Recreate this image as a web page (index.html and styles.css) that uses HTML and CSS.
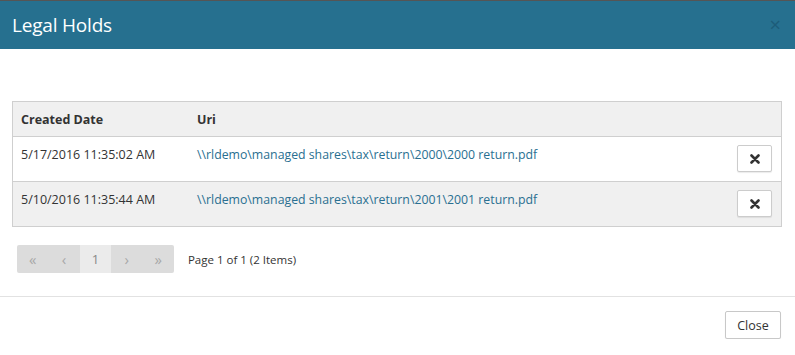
FILE: index.html
```html
<!DOCTYPE html>
<html>
<head>
<meta charset="utf-8">
<link rel="stylesheet" href="styles.css">
</head>
<body>
<div class="topbar"></div>
<div class="modal-header">
  <h1 class="modal-title">Legal Holds</h1>
  <span class="header-close">&times;</span>
</div>
<div class="modal-body">
  <div class="grid">
    <div class="row head">
      <div class="cell c-date">Created Date</div>
      <div class="cell c-uri">Uri</div>
      <div class="cell c-act"></div>
    </div>
    <div class="row">
      <div class="cell c-date">5/17/2016 11:35:02 AM</div>
      <div class="cell c-uri"><a class="link">\\rldemo\managed shares\tax\return\2000\2000 return.pdf</a></div>
      <div class="cell c-act"><button class="del-btn"><svg width="10" height="10" viewBox="0 0 10 10"><path d="M1.5 1.5 L8.5 8.5 M8.5 1.5 L1.5 8.5" stroke="#333" stroke-width="2.6" stroke-linecap="round"/></svg></button></div>
    </div>
    <div class="row alt">
      <div class="cell c-date">5/10/2016 11:35:44 AM</div>
      <div class="cell c-uri"><a class="link">\\rldemo\managed shares\tax\return\2001\2001 return.pdf</a></div>
      <div class="cell c-act"><button class="del-btn"><svg width="10" height="10" viewBox="0 0 10 10"><path d="M1.5 1.5 L8.5 8.5 M8.5 1.5 L1.5 8.5" stroke="#333" stroke-width="2.6" stroke-linecap="round"/></svg></button></div>
    </div>
  </div>
  <div class="pager-row">
    <div class="pager">
      <span class="pg">&laquo;</span>
      <span class="pg">&lsaquo;</span>
      <span class="pg active">1</span>
      <span class="pg">&rsaquo;</span>
      <span class="pg">&raquo;</span>
    </div>
    <span class="pager-info">Page 1 of 1 (2 Items)</span>
  </div>
</div>
<div class="modal-footer">
  <button class="close-btn">Close</button>
</div>
</body>
</html>
```
FILE: styles.css
```css
html, body {
  margin: 0;
  padding: 0;
  background: #fff;
  font-family: "Open Sans", "Noto Sans", sans-serif;
  color: #333;
}
.topbar {
  height: 1px;
  background: #555;
}
.modal-header {
  height: 48px;
  background: #26708f;
  display: flex;
  align-items: center;
  justify-content: space-between;
  padding: 0 14px 0 12px;
}
.modal-title {
  margin: 0;
  font-size: 19px;
  font-weight: 400;
  color: #fff;
  letter-spacing: -0.2px;
}
.header-close {
  color: #1b5874;
  font-size: 20px;
  line-height: 20px;
  opacity: 0.8;
}
.modal-body {
  padding: 52px 13px 0 12px;
  border-bottom: 1px solid #e2e2e2;
  height: 248px;
  box-sizing: border-box;
}
.grid {
  border: 1px solid #cfcfcf;
  font-size: 12.5px;
}
.row {
  display: flex;
  height: 44px;
  border-top: 1px solid #cfcfcf;
  background: #fff;
}
.row.head {
  height: 34px;
  border-top: none;
  background: #f0f0f0;
  font-weight: 700;
  align-items: center;
}
.row.alt {
  background: #f0f0f0;
}
.cell {
  box-sizing: border-box;
}
.row:not(.head) .cell {
  padding-top: 9px;
}
.c-date {
  width: 184px;
  padding-left: 8px;
}
.c-uri {
  flex: 1;
}
.c-act {
  width: 60px;
  display: flex;
  justify-content: flex-end;
  padding-right: 9px;
}
.row:not(.head) .c-act {
  padding-top: 8px;
}
.link {
  color: #2a6f91;
  font-size: 12.3px;
  text-decoration: none;
}
.del-btn {
  width: 35px;
  height: 27px;
  background: #fff;
  border: 1px solid #ccc;
  border-radius: 2px;
  display: flex;
  align-items: center;
  justify-content: center;
  padding: 0;
  box-shadow: 0 1px 1px rgba(0,0,0,0.08);
}
.pager-row {
  display: flex;
  align-items: center;
  margin-top: 18px;
  padding-left: 5px;
}
.pager {
  display: flex;
  background: #dcdcdc;
  border-radius: 2px;
  height: 28px;
}
.pg {
  width: 31.4px;
  display: flex;
  align-items: center;
  justify-content: center;
  color: #a8a8a8;
  font-size: 15px;
}
.pg.active {
  background: #ebebeb;
  color: #888;
  font-size: 13px;
}
.pager-info {
  margin-left: 14px;
  font-size: 11.5px;
  color: #333;
}
.modal-footer {
  display: flex;
  justify-content: flex-end;
  padding: 14px 14px 0 0;
}
.close-btn {
  width: 56px;
  height: 28px;
  background: #fff;
  border: 1px solid #c8c8c8;
  border-radius: 2px;
  font-family: "Open Sans", "Noto Sans", sans-serif;
  font-size: 12.5px;
  color: #333;
  box-shadow: 0 1px 1px rgba(0,0,0,0.08);
  padding: 0;
}
```
